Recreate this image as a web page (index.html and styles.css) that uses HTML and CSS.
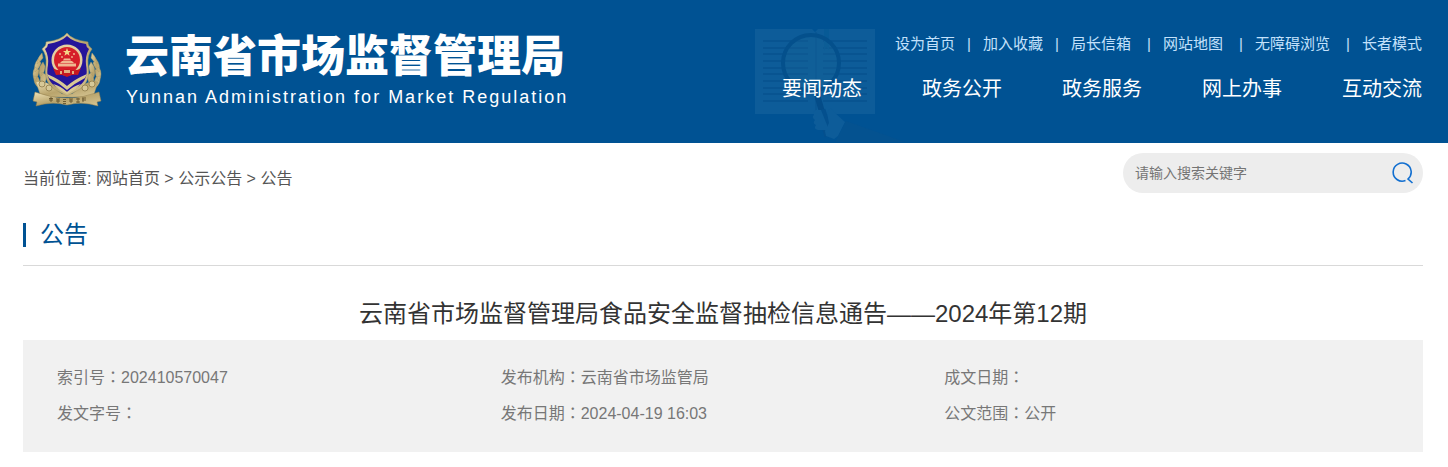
FILE: index.html
```html
<!DOCTYPE html>
<html lang="zh-CN">
<head>
<meta charset="utf-8">
<title>云南省市场监督管理局</title>
<link rel="stylesheet" href="styles.css">
</head>
<body>
<header class="site-header">
  <div class="brand">
    <svg class="emblem" viewBox="0 0 72 76" aria-hidden="true">
      <defs>
        <linearGradient id="gold" x1="0" y1="0" x2="1" y2="1">
          <stop offset="0" stop-color="#efe3b8"/>
          <stop offset="0.5" stop-color="#b9a46c"/>
          <stop offset="1" stop-color="#d8c896"/>
        </linearGradient>
      </defs>
      <g fill="url(#gold)" stroke="#a8965f" stroke-width=".4">
        <path d="M11 21 Q6 26 6 32 Q9 30 12 26Z M7 27 Q2 33 4 40 Q8 37 10 31Z M4 35 Q0 42 4 49 Q8 44 8 38Z M3 44 Q2 52 8 56 Q10 50 7 45Z M12 30 Q6 37 9 45 Q14 41 14 34Z M11 40 Q7 48 12 54 Q16 49 15 43Z"/>
        <path d="M61 21 Q66 26 66 32 Q63 30 60 26Z M65 27 Q70 33 68 40 Q64 37 62 31Z M68 35 Q72 42 68 49 Q64 44 64 38Z M69 44 Q70 52 64 56 Q62 50 65 45Z M60 30 Q66 37 63 45 Q58 41 58 34Z M61 40 Q65 48 60 54 Q56 49 57 43Z"/>
        <path d="M5 50 Q12 48 20 53 L31 62 H41 L52 53 Q60 48 67 50 L62 65 H10Z"/>
      </g>
      <path d="M36 1 Q41 8 57 10 Q56 13 61 17 Q56 23 57 33 Q60 49 49 57 L36 64 L23 57 Q12 49 15 33 Q16 23 11 17 Q16 13 15 10 Q31 8 36 1Z" fill="url(#gold)" stroke="#a8965f" stroke-width=".5"/>
      <path d="M36 4 Q42 10 55 12 Q55 15 58 17 Q54 24 55 33 Q58 47 48 54 L36 60 L24 54 Q14 47 17 33 Q18 24 14 17 Q17 15 17 12 Q30 10 36 4Z" fill="#25159a"/>
      <path d="M16 42 Q28 47 36 54 Q44 47 56 42 L54 46 Q44 51 36 58 Q28 51 18 46Z M22 52 Q30 54 36 60 Q42 54 50 52 L43 58 L36 62 L29 58Z" fill="#d9c995"/>
      <circle cx="36" cy="28" r="15.500" fill="#e5cfa0"/>
      <circle cx="36" cy="28" r="13" fill="#d61f29"/>
      <path d="M36 16l1.100 3h3l-2.400 1.800.9 3-2.600-1.700-2.600 1.700.9-3-2.400-1.800h3Z" fill="#f5d889"/>
      <g fill="#f0b890"><circle cx="29" cy="22" r="1"/><circle cx="43" cy="22" r="1"/><circle cx="31" cy="25" r=".9"/><circle cx="41" cy="25" r=".9"/>
      <path d="M32 28.500 L33 26.500 H39 L40 28.500Z M29 31 L31 29 H41 L43 31Z M27 34.500 V31.500 H45 V34.500Z"/></g>
      <path d="M22 36 Q27 40 36 37 Q45 40 50 36 L47 43 Q41 42 36 45 Q31 42 25 43Z" fill="#c71820"/>
      <path d="M29 39h2v3h-2z M33 38h6v3h-6z M41 39h2v3h-2z" fill="#e3ae80"/>
      <g fill="#d7c998" stroke="#85713f" stroke-width=".7"><circle cx="11" cy="52" r="3"/><circle cx="18" cy="56" r="3"/><circle cx="61" cy="52" r="3"/><circle cx="54" cy="56" r="3"/></g>
      <path d="M4 60 Q20 66 36 66 Q52 66 68 60 L70 69 L66 70 L67 74 Q51 69 36 73 Q21 69 5 74 L6 70 L2 69Z" fill="url(#gold)" stroke="#927f4c" stroke-width=".5"/>
      <path d="M18 66.500h4m-2-1.500v5m-2-2h4 M25 67h4m-4 2h4m-2-2v4 M32 67.500h3m-3 2h3m-3 2h3 M38 67h4m-4 2h4m-2-2v4 M45 67h4m-4 3h4m-2-4v5 M51 66h4m-4 2h4m-3-2v4" stroke="#66552d" stroke-width=".9" fill="none"/>
    </svg>
    <div class="brand-text">
      <h1 class="brand-name">云南省市场监督管理局</h1>
      <p class="brand-sub">Yunnan Administration for Market Regulation</p>
    </div>
  </div>
  <div class="header-right">
    <svg class="backdrop" viewBox="0 0 150 115" aria-hidden="true">
      <path d="M0 1H57L60 4L63 1H120V86H0Z" fill="#0d5c99"/>
      <path d="M8 13H53M8 20H53M8 26H53M8 33H53M8 40H53M8 46H53M8 53H53M8 60H53M8 66H53M8 73H53M68 13H112M68 20H112M68 26H112M68 33H112M68 40H112M68 46H112M68 53H112M68 60H112M68 66H112M68 73H112" stroke="#07528f" stroke-width="1.500"/>
      <path d="M61 4V84" stroke="#0a5794" stroke-width="2"/>
      <path d="M69 1H74V22L71 19L69 23Z" fill="#075a96"/>
      <circle cx="56" cy="35" r="28" fill="#176399" fill-opacity=".35" stroke="#04508c" stroke-width="4"/>
      <path d="M61 63L67 84" stroke="#044c88" stroke-width="6"/>
      <path d="M66 82L74 108" stroke="#04508e" stroke-width="9"/>
      <path d="M72 85Q76 77 79 84L90 94L83 108L79 111L71 108L70 103L74 95Z" fill="#0d5c99"/>
      <path d="M61 82Q57 83 59 87Q56 89 60 92Q57 95 61 97Q58 101 63 102L72 102V97L66 82Z" fill="#0d5c99"/>
      <path d="M91 93L150 114H80Z" fill="#045290"/>
    </svg>
    <nav class="tools" aria-label="工具">
      <a href="#">设为首页</a><span>|</span>
      <a href="#">加入收藏</a><span>|</span>
      <a href="#">局长信箱</a><span class="wide">|</span>
      <a href="#">网站地图</a><span class="wide">|</span>
      <a href="#">无障碍浏览</a><span class="wide">|</span>
      <a href="#">长者模式</a>
    </nav>
    <nav class="main-nav" aria-label="主导航">
      <a href="#">要闻动态</a>
      <a href="#">政务公开</a>
      <a href="#">政务服务</a>
      <a href="#">网上办事</a>
      <a href="#">互动交流</a>
    </nav>
  </div>
</header>
<main class="page">
  <div class="toolbar">
    <nav class="crumbs" aria-label="当前位置">当前位置: <a href="#">网站首页</a> &gt; <a href="#">公示公告</a> &gt; <a href="#">公告</a></nav>
    <form class="search" role="search">
      <input type="text" aria-label="搜索关键字" placeholder="请输入搜索关键字">
      <button type="button" aria-label="搜索">
        <svg viewBox="0 0 22 22" width="22" height="22" aria-hidden="true"><path d="M13.500 18.500A9 9 0 1 1 16 17L20.500 21" fill="none" stroke="#126fd0" stroke-width="1.600"/></svg>
      </button>
    </form>
  </div>
  <div class="section-head"><h2>公告</h2></div>
  <h3 class="article-title">云南省市场监督管理局食品安全监督抽检信息通告——2024年第12期</h3>
  <dl class="meta">
    <div><dt>索引号<span lang="zh-TW">：</span></dt><dd>202410570047</dd></div>
    <div><dt>发布机构<span lang="zh-TW">：</span></dt><dd>云南省市场监管局</dd></div>
    <div><dt>成文日期<span lang="zh-TW">：</span></dt><dd></dd></div>
    <div><dt>发文字号<span lang="zh-TW">：</span></dt><dd></dd></div>
    <div><dt>发布日期<span lang="zh-TW">：</span></dt><dd>2024-04-19 16:03</dd></div>
    <div><dt>公文范围<span lang="zh-TW">：</span></dt><dd>公开</dd></div>
  </dl>
</main>
</body>
</html>
```
FILE: styles.css
```css
* { box-sizing: border-box; margin: 0; padding: 0; }
body {
  background: #fff;
  color: #555;
  font: 16px/24px "Liberation Sans", "Noto Sans CJK SC", sans-serif;
}
a { color: inherit; text-decoration: none; }

.site-header {
  display: flex;
  justify-content: space-between;
  background: #005293;
  padding: 28px 26px 0 31px;
  color: #fff;
}
.brand { display: flex; gap: 22px; padding: 4px 0 34px; }
.emblem { width: 72px; height: 76px; }
.brand-name {
  font-size: 44px;
  line-height: 50px;
  font-weight: 900;
  white-space: nowrap;
}
.brand-sub {
  font-size: 18px;
  line-height: 20px;
  padding: 5px 0 2px 1px;
  letter-spacing: 2px;
  white-space: nowrap;
}
.header-right {
  position: relative;
  display: flex;
  flex-direction: column;
  align-items: flex-end;
  gap: 21px;
  padding-top: 4px;
}
.backdrop {
  position: absolute;
  top: 0;
  left: -27px;
  width: 150px;
  height: 115px;
}
.tools, .main-nav { position: relative; display: flex; white-space: nowrap; }
.tools { font-size: 15px; line-height: 24px; color: #c3e1fb; }
.tools span { width: 4px; margin: 0 12px; }
.tools .wide { margin-left: 16px; }
.main-nav { gap: 60px; font-size: 20px; line-height: 24px; }

.page { padding: 10px 25px 15px 23px; }
.toolbar { display: flex; justify-content: space-between; align-items: flex-start; }
.crumbs { padding-top: 14px; }
.search {
  display: flex;
  align-items: center;
  width: 300px;
  height: 40px;
  padding: 0 9px 0 12px;
  border-radius: 20px;
  background: #ededed;
}
.search input {
  flex: 1;
  min-width: 0;
  border: 0;
  outline: 0;
  background: none;
  color: #555;
  font: 14px/20px "Liberation Sans", "Noto Sans CJK SC", sans-serif;
}
.search input::placeholder { color: #757575; opacity: 1; }
.search button { display: flex; border: 0; background: none; cursor: pointer; }
.section-head { padding: 30px 0 18px; border-bottom: 1px solid #d9d9d9; }
.section-head h2 {
  border-left: 3px solid #005293;
  padding-left: 14px;
  color: #005293;
  font-size: 24px;
  line-height: 24px;
  font-weight: 400;
}
.article-title {
  padding: 31px 0 9px;
  color: #333;
  font-size: 24px;
  line-height: 34px;
  font-weight: 400;
  text-align: center;
}
.meta {
  display: grid;
  grid-template-columns: repeat(3, 1fr);
  padding: 20px 35px 20px 34px;
  background: #f1f1f1;
  color: #777;
  line-height: 36px;
}
.meta div { display: flex; align-items: baseline; }
.meta span { font-family: "Noto Sans CJK TC", sans-serif; line-height: 24px; }
```
